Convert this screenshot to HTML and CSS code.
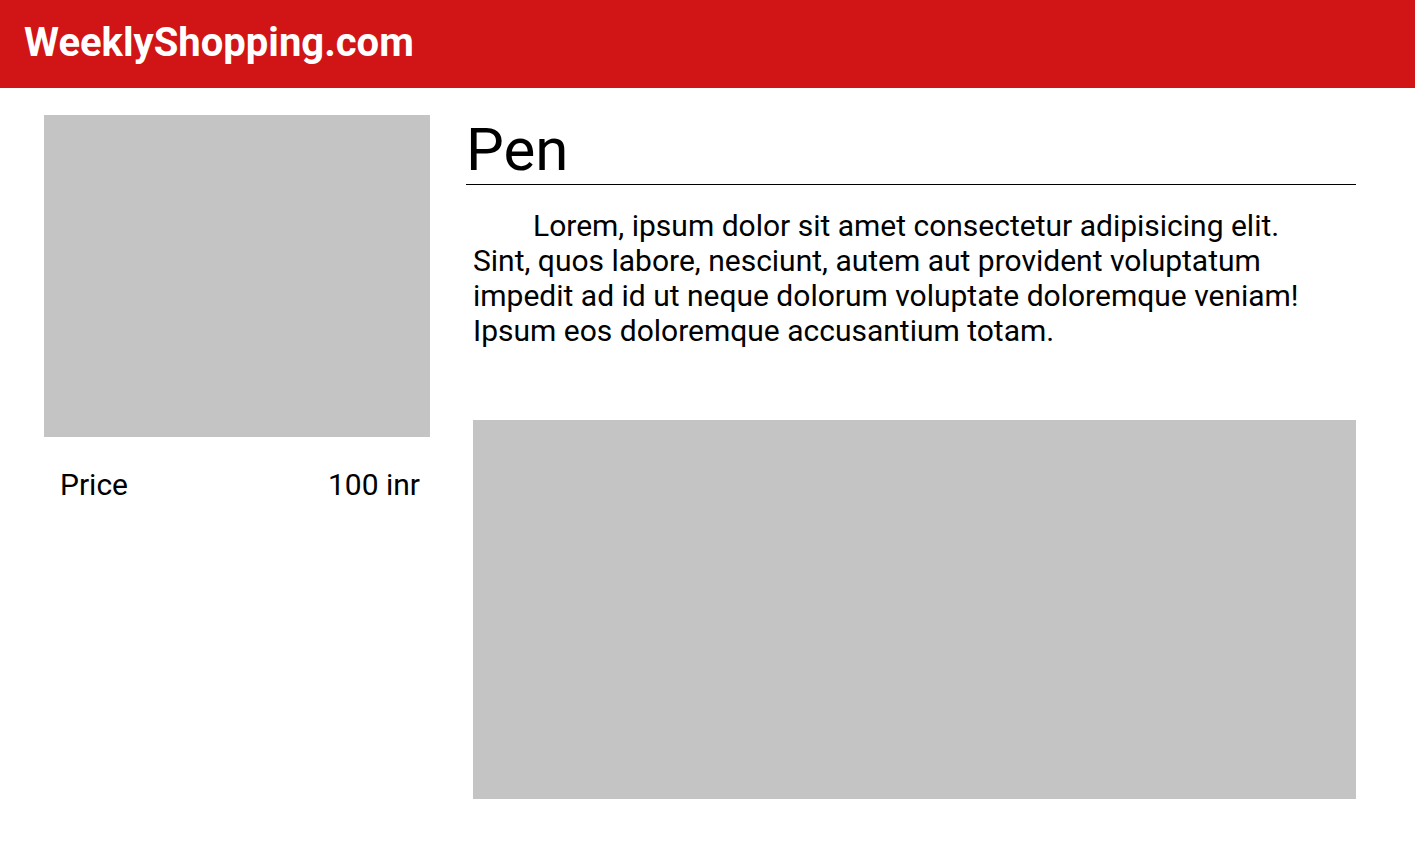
FILE: index.html
```html
<!DOCTYPE html>
<html>
<head>
<meta charset="utf-8">
<link rel="stylesheet" href="styles.css">
</head>
<body>
<header class="topbar">
  <h1 class="brand">WeeklyShopping.com</h1>
</header>
<main class="page">
  <aside class="side">
    <div class="thumb"></div>
    <div class="price-row">
      <span class="price-label">Price</span>
      <span class="price-value">100 inr</span>
    </div>
  </aside>
  <section class="detail">
    <h2 class="title">Pen</h2>
    <p class="desc">Lorem, ipsum dolor sit amet consectetur adipisicing elit. Sint, quos labore, nesciunt, autem aut provident voluptatum impedit ad id ut neque dolorum voluptate doloremque veniam! Ipsum eos doloremque accusantium totam.</p>
    <div class="gallery"></div>
  </section>
</main>
</body>
</html>
```
FILE: styles.css
```css
* { box-sizing: border-box; }
html, body { margin: 0; padding: 0; background: #fff; }
body { font-family: Roboto, "Liberation Sans", sans-serif; color: #000; }

.topbar {
  height: 88px;
  background: #d11415;
  display: flex;
  align-items: center;
  padding-left: 24px;
  padding-bottom: 2px;
}
.brand {
  margin: 0;
  color: #fff;
  font-size: 40px;
  font-weight: 700;
  line-height: 1;
}

.page {
  display: flex;
  gap: 36px;
  padding: 27px 59px 0 44px;
}
.side { width: 386px; flex: none; }
.thumb { height: 322px; background: #c4c4c4; }
.price-row {
  display: flex;
  justify-content: space-between;
  padding: 0 10px 0 16px;
  margin-top: 30px;
  font-size: 30px;
  line-height: 35px;
}

.detail { flex: 1; }
.title {
  margin: 0;
  font-size: 60px;
  font-weight: 400;
  line-height: 66px;
  padding-top: 2px;
  padding-bottom: 1px;
  border-bottom: 1px solid #000;
}
.desc {
  margin: 23px 40px 0 7px;
  font-size: 30px;
  line-height: 35px;
  text-indent: 60px;
}
.gallery {
  margin: 72px 0 0 7px;
  height: 379px;
  background: #c4c4c4;
}
```
